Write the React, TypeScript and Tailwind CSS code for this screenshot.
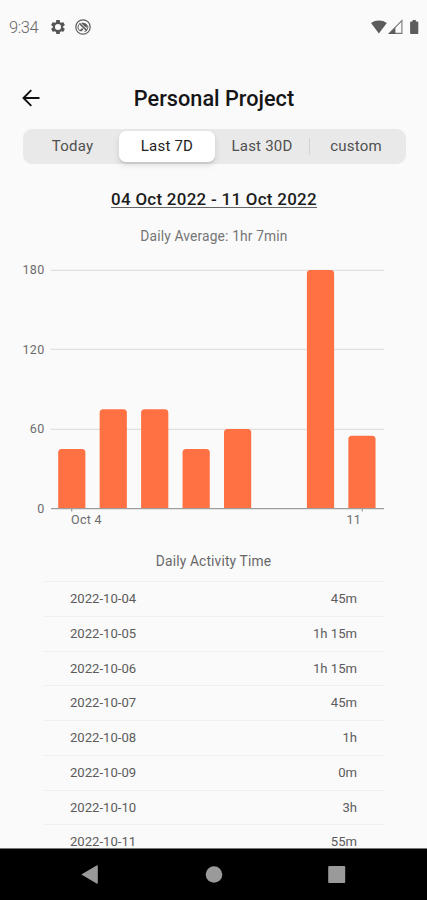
const ranges = ["Today", "Last 7D", "Last 30D", "custom"];

const days = [
  { date: "2022-10-04", minutes: 45, label: "45m" },
  { date: "2022-10-05", minutes: 75, label: "1h 15m" },
  { date: "2022-10-06", minutes: 75, label: "1h 15m" },
  { date: "2022-10-07", minutes: 45, label: "45m" },
  { date: "2022-10-08", minutes: 60, label: "1h" },
  { date: "2022-10-09", minutes: 0, label: "0m" },
  { date: "2022-10-10", minutes: 180, label: "3h" },
  { date: "2022-10-11", minutes: 55, label: "55m" },
];

const GEAR =
  "M19.14 12.94c.04-.3.06-.61.06-.94 0-.32-.02-.64-.07-.94l2.03-1.58c.18-.14.23-.41.12-.61l-1.92-3.32c-.12-.22-.37-.29-.59-.22l-2.39.96c-.5-.38-1.03-.7-1.62-.94l-.36-2.54c-.04-.24-.24-.41-.48-.41h-3.84c-.24 0-.43.17-.47.41l-.36 2.54c-.59.24-1.13.57-1.62.94l-2.39-.96c-.22-.08-.47 0-.59.22L2.74 8.87c-.12.21-.08.47.12.61l2.03 1.58c-.05.3-.09.63-.09.94s.02.64.07.94l-2.03 1.58c-.18.14-.23.41-.12.61l1.92 3.32c.12.22.37.29.59.22l2.39-.96c.5.38 1.03.7 1.62.94l.36 2.54c.05.24.24.41.48.41h3.84c.24 0 .44-.17.47-.41l.36-2.54c.59-.24 1.13-.56 1.62-.94l2.39.96c.22.08.47 0 .59-.22l1.92-3.32c.12-.22.07-.47-.12-.61l-2.01-1.58zM12 16.2a4.2 4.2 0 1 1 0-8.4 4.2 4.2 0 0 1 0 8.4z";

function StatusBar() {
  return (
    <div className="flex h-[54px] shrink-0 items-center pl-[9px] pr-[8px] text-[#686868]">
      <span className="w-[41px] pt-[2px] text-[16.5px] font-light leading-none tracking-[-0.4px]">9:34</span>
      <svg className="size-[16px]" viewBox="1 1 22 22" fill="#555">
        <path d={GEAR} />
      </svg>
      <svg className="ml-[9px] size-[16px]" viewBox="0 0 16 16" fill="none" stroke="#5c5c5c">
        <circle cx="8" cy="8" r="7.2" strokeWidth="1.2" />
        <path d="M4.6 11.8A5 5 0 0 1 3.6 5.6M12.6 6.4A5 5 0 0 1 9.4 12.7" strokeWidth="1" />
        <path d="M4.4 4.4 11.8 11.6" strokeWidth="1.5" />
        <path d="M6 4c2-.8 5.6-.4 6.2 2.4L11.4 9z" fill="#5c5c5c" stroke="none" />
        <path d="M4.4 11.8 7 9l1.4 1.4-2.2 2z" fill="#5c5c5c" stroke="none" />
      </svg>
      <svg className="ml-auto h-[16px] w-[49px]" viewBox="0 0 49 16" fill="#5c5c5c">
        <path d="M1 3.9C5.6.6 12.2.6 16.8 3.9L8.9 14.5z" />
        <path d="M31.9 1.7V14.4H19.2z" fill="none" stroke="#777" strokeWidth="1.1" />
        <path d="M25.4 8.2V15H18.6z" />
        <path d="M42.6 1h3.2v1.5h1.7c.5 0 .8.3.8.8v10.9c0 .5-.3.8-.8.8h-6.6a.8.8 0 0 1-.8-.8V3.3c0-.5.3-.8.8-.8h1.7z" />
      </svg>
    </div>
  );
}

function BarChart() {
  const baseline = 248.5;
  const perMinute = 238.5 / 180;
  return (
    <svg className="block h-[270px] w-full" viewBox="0 0 427 270" fontSize="12.5" fill="#6c6c6c">
      {[0, 60, 120, 180].map((v) => (
        <g key={v}>
          {v > 0 && <path d={`M51 ${Math.floor(baseline - v * perMinute) + 0.4}H384`} stroke="#e0e0e0" strokeWidth="1.3" />}
          <text x="44.5" y={baseline - v * perMinute + 4.3} textAnchor="end" letterSpacing="0.3">
            {v}
          </text>
        </g>
      ))}
      {days.map((d, i) => {
        const h = d.minutes * perMinute;
        const x = 58.2 + i * 41.45;
        if (!h) return null;
        return (
          <path
            key={d.date}
            d={`M${x} ${baseline}v${3.5 - h}q0-3.5 3.5-3.5h20.2q3.5 0 3.5 3.5v${h - 3.5}z`}
            fill="#ff7043"
          />
        );
      })}
      <path d="M51 248.7H384M71.7 249v2.5M362.2 249v2.5" stroke="#9e9e9e" strokeWidth="1.2" fill="none" />
      <text x="71" y="263.5" letterSpacing="0.3">Oct 4</text>
      <text x="346.5" y="263.5" letterSpacing="0.3">11</text>
    </svg>
  );
}

export default function App() {
  return (
    <div className="flex h-[900px] w-[427px] flex-col overflow-hidden bg-[#fafafa] font-['Roboto',sans-serif]">
      <StatusBar />

      <header className="grid h-[75px] shrink-0 grid-cols-[60px_1fr_60px] items-center pt-[14px]">
        <svg className="mb-px ml-[22px] size-[18px]" viewBox="0 0 18 18" fill="none" stroke="#111" strokeWidth="1.9">
          <path d="M17.5 9H2M9.3 1.2 1.5 9l7.8 7.8" />
        </svg>
        <h1 className="pl-px pt-px text-center text-[21.7px] font-medium leading-none text-[#151515]">
          Personal Project
        </h1>
      </header>

      <div className="ml-[23px] mr-[21px] grid h-[35px] shrink-0 grid-cols-[96px_96px_94px_1fr] items-center rounded-[9px] bg-[#e9e9e9] text-[15px] tracking-[0.2px] text-[#505050]">
        {ranges.map((r, i) => (
          <button
            key={r}
            className={
              i === 1
                ? "h-[31px] rounded-[7px] bg-white text-[#222] shadow-[0_3px_6px_rgba(0,0,0,0.12),0_2px_1px_rgba(0,0,0,0.06)]"
                : i === 3
                  ? "h-[17px] border-l border-[#d2d2d2] pr-[4px] leading-[17px]"
                  : i === 0
                    ? "h-[31px] pl-[3px]"
                    : "h-[31px]"
            }
          >
            {r}
          </button>
        ))}
      </div>

      <div className="flex h-[96px] shrink-0 flex-col items-center pl-px pt-[27px]">
        <div className="h-[17px] border-b border-[#666] text-[16.9px] font-medium leading-[17px] tracking-[0.3px] text-[#1c1c1c]">
          04 Oct 2022 - 11 Oct 2022
        </div>
        <div className="mt-[20px] text-[13.8px] leading-[17px] tracking-[0.15px] text-[#757575]">
          Daily Average: 1hr 7min
        </div>
      </div>

      <BarChart />

      <main className="min-h-0 flex-1 overflow-hidden">
        <h2 className="h-[51px] pt-[22px] text-center text-[13.8px] font-normal leading-[18px] tracking-[0.15px] text-[#686868]">
          Daily Activity Time
        </h2>
        <ul className="ml-[43px] mr-[42px]">
          {days.map((d) => (
            <li
              key={d.date}
              className="flex h-[34.75px] items-center justify-between border-t border-[#f0f0f0] pl-[27px] pr-[28px] text-[13.1px] text-[#5c5c5c]"
            >
              <span>{d.date}</span>
              <span>{d.label}</span>
            </li>
          ))}
        </ul>
      </main>

      <nav className="h-[52px] shrink-0 border-t border-[#777] bg-black">
        <svg className="block h-[51px] w-full" viewBox="0 0 427 51" fill="#9a9a9a">
          <path d="M81.3 25.5 96.6 16.5q1.2-.5 1.2.7v16.6q0 1.2-1.2.7z" />
          <circle cx="214" cy="25.5" r="8.3" />
          <rect x="328.2" y="17" width="17" height="17" rx="1" />
        </svg>
      </nav>
    </div>
  );
}
